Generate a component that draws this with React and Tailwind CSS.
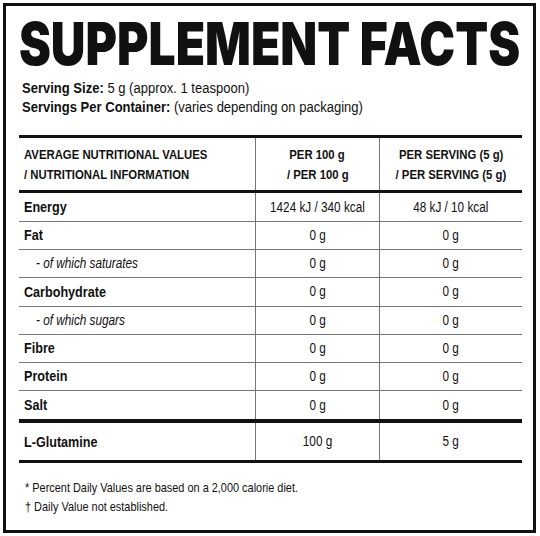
import React from 'react';

const rows = [
  { name: 'Energy', per100: '1424 kJ / 340 kcal', perServing: '48 kJ / 10 kcal' },
  { name: 'Fat', per100: '0 g', perServing: '0 g' },
  { name: '- of which saturates', per100: '0 g', perServing: '0 g', sub: true },
  { name: 'Carbohydrate', per100: '0 g', perServing: '0 g' },
  { name: '- of which sugars', per100: '0 g', perServing: '0 g', sub: true },
  { name: 'Fibre', per100: '0 g', perServing: '0 g' },
  { name: 'Protein', per100: '0 g', perServing: '0 g' },
  { name: 'Salt', per100: '0 g', perServing: '0 g', last: true },
];

// the label font is a condensed grotesk; squeeze Liberation Sans to match
const Narrow = ({ children, center }) => (
  <span className={`inline-block whitespace-nowrap scale-x-[0.84] ${center ? 'origin-center' : 'origin-left'}`}>
    {children}
  </span>
);

const App = () => {
  return (
    <div className="w-[540px] h-[536px] bg-white pt-[3px] pl-[3px] font-['Liberation_Sans',Arial,sans-serif] text-[#111]">
      <div className="w-[533px] h-[530px] border-[3px] border-[#111] flex flex-col">
        <div className="h-[72px] flex items-center justify-center">
          <h1 className="font-['Inter',sans-serif] font-black text-[48px] leading-none mt-[3px] scale-y-[1.23] whitespace-nowrap">
            SUPPLEMENT FACTS
          </h1>
        </div>

        <div className="pl-[16px] text-[15.5px] leading-[19px]">
          <p><Narrow><span className="font-bold">Serving Size:</span> 5 g (approx. 1 teaspoon)</Narrow></p>
          <p><Narrow><span className="font-bold">Servings Per Container:</span> (varies depending on packaging)</Narrow></p>
        </div>

        <div className="ml-[13px] mt-[19px] w-[503px] border-t-[3px] border-[#111]">
          <div className="grid grid-cols-[236px_124px_143px] h-[55px] border-b-[3px] border-[#111] text-[13.5px] leading-[20px] font-bold">
            <div className="flex flex-col justify-center pl-[5px] pt-[2px]">
              <Narrow>AVERAGE NUTRITIONAL VALUES</Narrow>
              <Narrow>/ NUTRITIONAL INFORMATION</Narrow>
            </div>
            <div className="flex flex-col justify-center items-center pt-[2px] border-l border-[#777]">
              <Narrow center>PER 100 g</Narrow>
              <Narrow center>/ PER 100 g</Narrow>
            </div>
            <div className="flex flex-col justify-center items-center pt-[2px] border-l border-[#777]">
              <Narrow center>PER SERVING (5 g)</Narrow>
              <Narrow center>/ PER SERVING (5 g)</Narrow>
            </div>
          </div>

          {rows.map((row, i) => (
            <div
              key={row.name}
              className={`grid grid-cols-[236px_124px_143px] text-[14px] ${i === 0 ? 'h-[29px]' : 'h-[28.2px]'} ${row.last ? '' : 'border-b border-[#777]'}`}
            >
              <div className={`flex items-center ${row.sub ? 'pl-[17px] italic text-[14px]' : 'pl-[5px] font-bold text-[15px]'}`}>
                <Narrow>{row.name}</Narrow>
              </div>
              <div className="flex items-center justify-center border-l border-[#777]"><Narrow center>{row.per100}</Narrow></div>
              <div className="flex items-center justify-center border-l border-[#777]"><Narrow center>{row.perServing}</Narrow></div>
            </div>
          ))}

          <div className="grid grid-cols-[236px_124px_143px] h-[44px] border-t-4 border-b-[3px] border-[#111] text-[14px]">
            <div className="flex items-center pl-[5px] font-bold text-[15px]"><Narrow>L-Glutamine</Narrow></div>
            <div className="flex items-center justify-center border-l border-[#777]"><Narrow center>100 g</Narrow></div>
            <div className="flex items-center justify-center border-l border-[#777]"><Narrow center>5 g</Narrow></div>
          </div>
        </div>

        <div className="pl-[19px] mt-[15px] text-[13px] leading-[19px]">
          <p><Narrow>* Percent Daily Values are based on a 2,000 calorie diet.</Narrow></p>
          <p><Narrow>† Daily Value not established.</Narrow></p>
        </div>
      </div>
    </div>
  );
};

export default App;
